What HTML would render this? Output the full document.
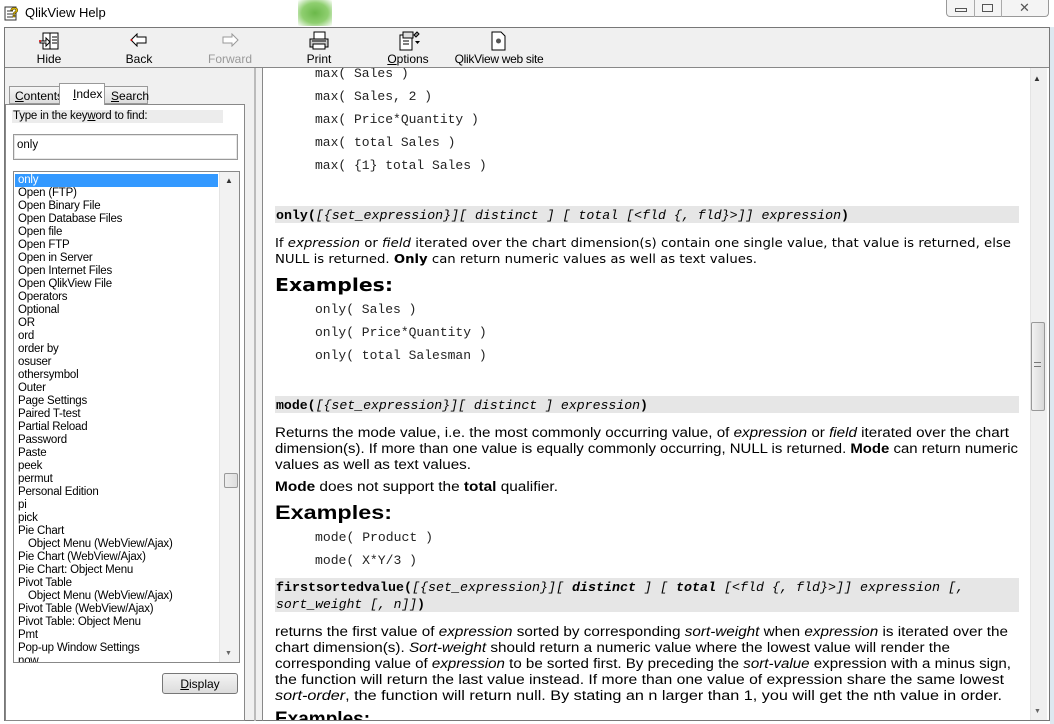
<!DOCTYPE html>
<html><head><meta charset="utf-8"><style>
*{margin:0;padding:0;box-sizing:border-box}
body{width:1054px;height:724px;overflow:hidden;background:#fff;font-family:"Liberation Sans",sans-serif;position:relative}
.a{position:absolute}
.tb{font-size:12px;color:#000;text-align:center;width:100px;top:52px}
.li{position:absolute;left:4px;font-size:11.5px;line-height:13px;white-space:nowrap;letter-spacing:-0.2px}
.mono{font-family:"Liberation Mono",monospace}
.sans{font-family:"DejaVu Sans",sans-serif}
.lib{font-family:"Liberation Sans",sans-serif}
</style></head><body>
<!-- title bar -->
<div class="a" style="left:0;top:0;width:1054px;height:27px;background:#fff"></div>
<div class="a" style="left:298px;top:0;width:34px;height:26px;background:radial-gradient(ellipse at center,#6bb84a 0%,#8fcf70 55%,rgba(255,255,255,0) 100%)"></div>
<svg class="a" style="left:4px;top:4px" width="16" height="18"><rect x="1" y="3" width="11" height="13" fill="#fff" stroke="#333"/><line x1="3" y1="7" x2="9" y2="7" stroke="#333"/><line x1="3" y1="10" x2="9" y2="10" stroke="#333"/><line x1="3" y1="13" x2="9" y2="13" stroke="#333"/><text x="6" y="13" font-size="14" font-weight="bold" fill="#e8c000" stroke="#554400" stroke-width=".6" style="font-family:'Liberation Sans'">?</text></svg>
<div class="a" style="left:25px;top:5px;font-size:13px">QlikView Help</div>
<div class="a" style="left:946px;top:0;width:103px;height:17px;border:1px solid #999;border-top:none;border-radius:0 0 4px 4px;background:#f4f4f4"></div>
<div class="a" style="left:974px;top:0;width:1px;height:17px;background:#aaa"></div>
<div class="a" style="left:1001px;top:0;width:1px;height:17px;background:#aaa"></div>
<div class="a" style="left:955px;top:8px;width:12px;height:4px;border:1px solid #555"></div>
<div class="a" style="left:982px;top:4px;width:11px;height:8px;border:1px solid #555"></div>
<div class="a" style="left:1019px;top:0px;font-size:13px;color:#555">✕</div>
<!-- window frame -->
<div class="a" style="left:4px;top:27px;width:1046px;height:694px;border:1px solid #777;background:#f0f0f0"></div>
<div class="a" style="left:1050px;top:27px;width:4px;height:697px;background:#dde8f0"></div>
<!-- toolbar -->
<div class="a" style="left:5px;top:67px;width:1044px;height:1px;background:#888"></div>
<svg class="a" style="left:38px;top:32px" width="22" height="18"><rect x="5" y="1" width="15" height="16" fill="#fff" stroke="#000"/><line x1="12" y1="1" x2="12" y2="17" stroke="#000"/><line x1="14" y1="5" x2="19" y2="5" stroke="#000"/><line x1="14" y1="8" x2="19" y2="8" stroke="#000"/><line x1="14" y1="11" x2="19" y2="11" stroke="#000"/><path d="M2 9h6v-3l4 4-4 4v-3H2z" fill="#fff" stroke="#000"/><circle cx="2" cy="9" r="1" fill="#d00"/></svg>
<svg class="a" style="left:130px;top:33px" width="18" height="14"><path d="M1 7l6-6v3h9v6H7v3z" fill="#fff" stroke="#000"/><circle cx="1.5" cy="7" r="1" fill="#c00"/></svg>
<svg class="a" style="left:221px;top:33px" width="18" height="14"><path d="M17 7l-6-6v3H2v6h9v3z" fill="#fff" stroke="#999"/></svg>
<svg class="a" style="left:308px;top:31px" width="22" height="20"><rect x="6" y="1" width="11" height="7" fill="#fff" stroke="#000"/><path d="M2 8h18v8H2z" fill="#ccc" stroke="#000"/><rect x="5" y="13" width="12" height="5" fill="#fff" stroke="#000"/><line x1="4" y1="10" x2="18" y2="10" stroke="#000"/></svg>
<svg class="a" style="left:398px;top:31px" width="24" height="20"><rect x="2" y="4" width="12" height="15" fill="#fff" stroke="#000"/><rect x="5" y="1" width="10" height="6" fill="#ddd" stroke="#000"/><line x1="5" y1="10" x2="11" y2="10" stroke="#000"/><line x1="5" y1="13" x2="11" y2="13" stroke="#000"/><path d="M16 4l3-3 2 2-3 3z" fill="#999" stroke="#000"/><path d="M17 10h5l-2.5 3z" fill="#000"/></svg>
<svg class="a" style="left:491px;top:31px" width="16" height="20"><path d="M1 1h9l4 4v14H1z" fill="#fff" stroke="#000"/><circle cx="7.5" cy="10" r="2.5" fill="#555"/></svg>
<div class="a tb" style="left:-1px">Hide</div>
<div class="a tb" style="left:89px">Back</div>
<div class="a tb" style="left:180px;color:#999">Forward</div>
<div class="a tb" style="left:269px">Print</div>
<div class="a tb" style="left:358px"><u>O</u>ptions</div>
<div class="a tb" style="left:449px;width:100px;letter-spacing:-0.3px">QlikView web site</div>
<!-- left pane -->
<div class="a" style="left:9px;top:86px;width:51px;height:18px;border:1px solid #999;background:linear-gradient(#f6f6f6,#ddd);font-size:12px;padding:2px 0 0 5px"><u>C</u>ontents</div>
<div class="a" style="left:104px;top:86px;width:44px;height:18px;border:1px solid #999;background:linear-gradient(#f6f6f6,#ddd);font-size:12px;padding:2px 0 0 6px"><u>S</u>earch</div>
<div class="a" style="left:5px;top:104px;width:240px;height:617px;border:1px solid #888;background:#fff"></div>
<div class="a" style="left:59px;top:83px;width:46px;height:22px;border:1px solid #999;border-bottom:none;background:#fff;font-size:12px;padding:3px 0 0 13px"><u>I</u>ndex</div>
<div class="a" style="left:12px;top:110px;width:211px;height:13px;background:#ececec;font-size:11.5px;line-height:13px;padding-left:1px;letter-spacing:-0.2px">Type in the key<u>w</u>ord to find:</div>
<div class="a" style="left:13px;top:134px;width:225px;height:26px;border:1px solid #999;box-shadow:inset 0 0 0 1px #e6e6e6;font-size:11.5px;padding:4px 0 0 3px">only</div>
<div class="a" style="left:13px;top:171px;width:227px;height:492px;border:1px solid #888;background:#fff;overflow:hidden">
<div class="a" style="left:1px;top:2px;width:203px;height:13px;background:#3399ff"></div>
<div class="a" style="left:205px;top:0;width:20px;height:490px;background:#f2f2f2;border-left:1px solid #e4e4e4"></div>
<div class="a" style="left:210px;top:301px;width:14px;height:15px;border:1px solid #999;border-radius:2px;background:linear-gradient(90deg,#eee,#ddd)"></div>
<div class="a" style="left:211px;top:4px;font-size:8px;color:#333">▲</div>
<div class="a" style="left:211px;top:478px;font-size:7px;color:#666">▼</div>
<div class="li" style="top:2px;color:#fff">only</div>
<div class="li" style="top:15px">Open (FTP)</div>
<div class="li" style="top:28px">Open Binary File</div>
<div class="li" style="top:41px">Open Database Files</div>
<div class="li" style="top:54px">Open file</div>
<div class="li" style="top:67px">Open FTP</div>
<div class="li" style="top:80px">Open in Server</div>
<div class="li" style="top:93px">Open Internet Files</div>
<div class="li" style="top:106px">Open QlikView File</div>
<div class="li" style="top:119px">Operators</div>
<div class="li" style="top:132px">Optional</div>
<div class="li" style="top:145px">OR</div>
<div class="li" style="top:158px">ord</div>
<div class="li" style="top:171px">order by</div>
<div class="li" style="top:184px">osuser</div>
<div class="li" style="top:197px">othersymbol</div>
<div class="li" style="top:210px">Outer</div>
<div class="li" style="top:223px">Page Settings</div>
<div class="li" style="top:236px">Paired T-test</div>
<div class="li" style="top:249px">Partial Reload</div>
<div class="li" style="top:262px">Password</div>
<div class="li" style="top:275px">Paste</div>
<div class="li" style="top:288px">peek</div>
<div class="li" style="top:301px">permut</div>
<div class="li" style="top:314px">Personal Edition</div>
<div class="li" style="top:327px">pi</div>
<div class="li" style="top:340px">pick</div>
<div class="li" style="top:353px">Pie Chart</div>
<div class="li" style="top:366px;left:14px">Object Menu (WebView/Ajax)</div>
<div class="li" style="top:379px">Pie Chart (WebView/Ajax)</div>
<div class="li" style="top:392px">Pie Chart: Object Menu</div>
<div class="li" style="top:405px">Pivot Table</div>
<div class="li" style="top:418px;left:14px">Object Menu (WebView/Ajax)</div>
<div class="li" style="top:431px">Pivot Table (WebView/Ajax)</div>
<div class="li" style="top:444px">Pivot Table: Object Menu</div>
<div class="li" style="top:457px">Pmt</div>
<div class="li" style="top:470px">Pop-up Window Settings</div>
<div class="li" style="top:483px">now</div>
</div>
<div class="a" style="left:162px;top:673px;width:76px;height:21px;border:1px solid #777;border-radius:3px;background:linear-gradient(#f4f4f4,#dcdcdc);font-size:12px;text-align:center;padding-top:3px"><u>D</u>isplay</div>
<!-- splitter -->
<div class="a" style="left:254px;top:68px;width:2px;height:653px;background:#bbb"></div>
<div class="a" style="left:262px;top:68px;width:1px;height:653px;background:#888"></div>
<!-- content -->
<div class="a" style="left:263px;top:68px;width:786px;height:652px;background:#fff"></div>
<div class="a" style="left:1030px;top:68px;width:17px;height:652px;background:#f0f0f0;border-left:1px solid #e4e4e4"></div>
<div class="a" style="left:1031px;top:322px;width:14px;height:89px;border:1px solid #999;border-radius:2px;background:linear-gradient(90deg,#f2f2f2,#d8d8d8)"></div>
<div class="a" style="left:1034px;top:362px;width:7px;height:5px;border-top:1px solid #777;border-bottom:1px solid #777"></div>
<div class="a" style="left:1033px;top:74px;font-size:8px;color:#333">▲</div>
<div class="a" style="left:1034px;top:708px;font-size:7px;color:#666">▼</div>
<svg class="a" style="left:0;top:0" width="1054" height="724">
<defs><clipPath id="c"><rect x="263" y="68" width="767" height="652"/></clipPath></defs>
<g clip-path="url(#c)" class="mono" font-size="13">
<rect x="275" y="206" width="744" height="17" fill="#e6e6e6"/>
<rect x="275" y="396" width="744" height="17" fill="#e6e6e6"/>
<rect x="275" y="578" width="744" height="34" fill="#e6e6e6"/>
<g fill="#222">
<text x="315" y="77">max( Sales )</text>
<text x="315" y="100">max( Sales, 2 )</text>
<text x="315" y="123">max( Price*Quantity )</text>
<text x="315" y="146">max( total Sales )</text>
<text x="315" y="169">max( {1} total Sales )</text>
<text x="315" y="313">only( Sales )</text>
<text x="315" y="336">only( Price*Quantity )</text>
<text x="315" y="359">only( total Salesman )</text>
<text x="315" y="541" textLength="118" lengthAdjust="spacingAndGlyphs">mode( Product )</text>
<text x="315" y="564" textLength="102" lengthAdjust="spacingAndGlyphs">mode( X*Y/3 )</text>
</g>
<text x="276" y="219" textLength="573" lengthAdjust="spacingAndGlyphs"><tspan font-weight="bold">only(</tspan><tspan font-style="italic">[{set_expression}][ distinct ] [ total [&lt;fld {, fld}&gt;]] expression</tspan><tspan font-weight="bold">)</tspan></text>
<text x="276" y="409" textLength="372" lengthAdjust="spacingAndGlyphs"><tspan font-weight="bold">mode(</tspan><tspan font-style="italic">[{set_expression}][ distinct ] expression</tspan><tspan font-weight="bold">)</tspan></text>
<text x="276" y="591" textLength="688" lengthAdjust="spacingAndGlyphs"><tspan font-weight="bold">firstsortedvalue(</tspan><tspan font-style="italic">[{set_expression}][ <tspan font-weight="bold">distinct</tspan> ] [ <tspan font-weight="bold">total</tspan> [&lt;fld {, fld}&gt;]] expression [,</tspan></text>
<text x="276" y="608" textLength="149" lengthAdjust="spacingAndGlyphs" font-style="italic">sort_weight [, n]]<tspan font-style="normal" font-weight="bold">)</tspan></text>
<g class="sans" font-size="12.5" fill="#000">
<text x="275" y="247" textLength="736" lengthAdjust="spacingAndGlyphs">If <tspan font-style="italic">expression</tspan> or <tspan font-style="italic">field</tspan> iterated over the chart dimension(s) contain one single value, that value is returned, else</text>
<text x="275" y="263" textLength="482" lengthAdjust="spacingAndGlyphs">NULL is returned. <tspan font-weight="bold">Only</tspan> can return numeric values as well as text values.</text>
</g>
<g class="lib" font-size="13.5" fill="#000">
<text x="275" y="437" textLength="734" lengthAdjust="spacingAndGlyphs">Returns the mode value, i.e. the most commonly occurring value, of <tspan font-style="italic">expression</tspan> or <tspan font-style="italic">field</tspan> iterated over the chart</text>
<text x="275" y="453" textLength="743" lengthAdjust="spacingAndGlyphs">dimension(s). If more than one value is equally commonly occurring, NULL is returned. <tspan font-weight="bold">Mode</tspan> can return numeric</text>
<text x="275" y="469" textLength="196" lengthAdjust="spacingAndGlyphs">values as well as text values.</text>
<text x="275" y="491" textLength="283" lengthAdjust="spacingAndGlyphs"><tspan font-weight="bold">Mode</tspan> does not support the <tspan font-weight="bold">total</tspan> qualifier.</text>
<text x="275" y="636" textLength="733" lengthAdjust="spacingAndGlyphs">returns the first value of <tspan font-style="italic">expression</tspan> sorted by corresponding <tspan font-style="italic">sort-weight</tspan> when <tspan font-style="italic">expression</tspan> is iterated over the</text>
<text x="275" y="652" textLength="675" lengthAdjust="spacingAndGlyphs">chart dimension(s). <tspan font-style="italic">Sort-weight</tspan> should return a numeric value where the lowest value will render the</text>
<text x="275" y="668" textLength="736" lengthAdjust="spacingAndGlyphs">corresponding value of <tspan font-style="italic">expression</tspan> to be sorted first. By preceding the <tspan font-style="italic">sort-value</tspan> expression with a minus sign,</text>
<text x="275" y="684" textLength="729" lengthAdjust="spacingAndGlyphs">the function will return the last value instead. If more than one value of expression share the same lowest</text>
<text x="275" y="700" textLength="727" lengthAdjust="spacingAndGlyphs"><tspan font-style="italic">sort-order</tspan>, the function will return null. By stating an n larger than 1, you will get the nth value in order.</text>
<text x="275" y="725" font-weight="bold" font-size="19">Examples:</text>
</g>
<text x="275" y="291" textLength="118" lengthAdjust="spacingAndGlyphs" class="sans" font-weight="bold" font-size="18">Examples:</text>
<text x="275" y="519" textLength="117" lengthAdjust="spacingAndGlyphs" class="lib" font-weight="bold" font-size="19">Examples:</text>
</g>
</svg>
</body></html>
